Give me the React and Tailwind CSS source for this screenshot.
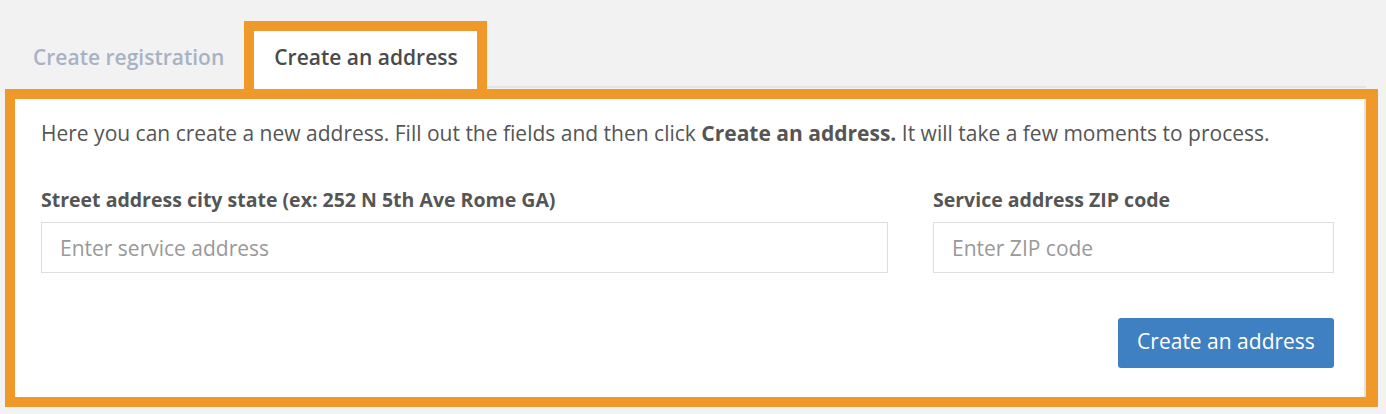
export default function App() {
  const orange = 'border-[#f0992b]';

  return (
    <div className="h-[414px] w-[1386px] overflow-hidden bg-[#f2f2f2] font-['Open_Sans',sans-serif]">
      {/* tabs */}
      <div className="flex items-end pt-[21px]">
        <div className="ml-[13px] flex h-[68px] items-center px-5 pb-[4px] pt-[10px] text-[21px] font-semibold text-[#a7b3c4]">
          Create registration
        </div>
        <div className={`flex h-[68px] items-center border-[10px] border-b-0 ${orange} bg-white pb-[4px] pl-5 pr-[19px] text-[21px] font-semibold text-[#4a4a4a]`}>
          Create an address
        </div>
        <div className="mb-[1px] mr-[20px] h-[2px] flex-1 bg-[#e4e4e4]" />
      </div>

      {/* panel */}
      <div className={`mx-[5px] h-[318px] w-[1373px] border-[10px] border-r-[12px] ${orange}`}>
        <div className="flex h-full flex-col border-r-2 border-[#e3e3e3] bg-white pl-[26px] pr-[30px] pt-[21px] text-[#555]">
          <p className="text-[21px] leading-[26px]">
            Here you can create a new address. Fill out the fields and then click{' '}
            <span className="font-bold">Create an address.</span> It will take a few moments to process.
          </p>

          <div className="mt-[42px] flex gap-[45px]">
            <div className="flex w-[847px] flex-col">
              <label className="text-[19.5px] font-bold leading-[24px] text-[#555]">
                Street address city state (ex: 252 N 5th Ave Rome GA)
              </label>
              <input
                type="text"
                placeholder="Enter service address"
                className="mt-[10px] h-[51px] w-full border border-[#dedede] px-[18px] text-[21px] text-[#555] outline-none placeholder:text-[#999]"
              />
            </div>
            <div className="flex w-[401px] flex-col">
              <label className="text-[19.5px] font-bold leading-[24px] text-[#555]">
                Service address ZIP code
              </label>
              <input
                type="text"
                placeholder="Enter ZIP code"
                className="mt-[10px] h-[51px] w-full border border-[#dedede] px-[18px] text-[21px] text-[#555] outline-none placeholder:text-[#999]"
              />
            </div>
          </div>

          <div className="mt-[45px] flex justify-end">
            <button
              type="button"
              className="h-[50px] w-[216px] rounded-[3px] bg-[#3f80c2] pb-[2px] text-[21px] text-white"
            >
              Create an address
            </button>
          </div>
        </div>
      </div>
    </div>
  );
}
